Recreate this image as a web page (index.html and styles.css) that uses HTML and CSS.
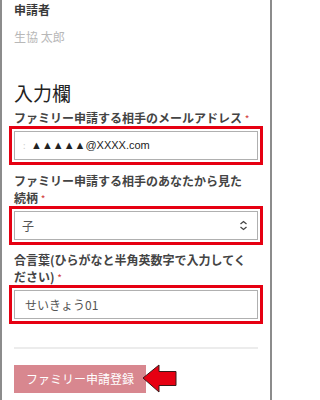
FILE: index.html
```html
<!DOCTYPE html>
<html lang="ja">
<head>
<meta charset="utf-8">
<link rel="stylesheet" href="styles.css">
</head>
<body>
<div class="page">
  <div class="applicant-label">申請者</div>
  <div class="applicant-name">生協 太郎</div>
  <h2 class="section-title">入力欄</h2>

  <div class="field field-first">
    <div class="label">ファミリー申請する相手のメールアドレス <span class="req">*</span></div>
    <div class="highlight">
      <div class="control control-email"><span class="ghost">:</span><span class="email">▲▲▲▲▲@XXXX.com</span></div>
    </div>
  </div>

  <div class="field field-second">
    <div class="label">ファミリー申請する相手のあなたから見た<br>続柄 <span class="req">*</span></div>
    <div class="highlight">
      <div class="control control-select">
        <span>子</span>
        <svg class="chevron" width="9" height="11" viewBox="0 0 9 11"><path d="M1.5 4 L4.5 1.5 L7.5 4 M1.5 7 L4.5 9.5 L7.5 7" fill="none" stroke="#444" stroke-width="1.3"/></svg>
      </div>
    </div>
  </div>

  <div class="field field-third">
    <div class="label">合言葉(ひらがなと半角英数字で入力してく<br>ださい) <span class="req">*</span></div>
    <div class="highlight">
      <div class="control control-text">せいきょう01</div>
    </div>
  </div>

  <hr class="divider">

  <div class="actions">
    <button class="submit">ファミリー申請登録</button>
    <svg class="arrow" width="36" height="30" viewBox="0 0 36 30"><path d="M1 14 L17 1 L17 7.5 L34 7.5 L34 21.5 L17 21.5 L17 28 Z" fill="#e60012" stroke="#3a1a1a" stroke-width="1"/></svg>
  </div>
</div>
</body>
</html>
```
FILE: styles.css
```css
html, body {
  margin: 0;
  padding: 0;
  background: #fff;
}
.page {
  box-sizing: border-box;
  width: 272px;
  height: 400px;
  border-left: 2px solid #8c8c8c;
  border-right: 2px solid #8c8c8c;
  padding: 0 12px;
  font-family: "Noto Sans CJK JP", "Noto Sans", sans-serif;
  color: #333;
  overflow: hidden;
}
.applicant-label {
  font-size: 12px;
  line-height: 20px;
  font-weight: bold;
  color: #3a3a3a;
}
.applicant-name {
  margin-top: 7px;
  font-size: 12px;
  line-height: 20px;
  color: #b8b8b8;
}
.section-title {
  margin: 32px 0 0;
  font-size: 19px;
  line-height: 28px;
  font-weight: normal;
  color: #222;
}
.field-first {
  margin-top: 2px;
}
.field-second {
  margin-top: 7px;
}
.field-third {
  margin-top: 6px;
}
.label {
  font-size: 12px;
  line-height: 17px;
  font-weight: bold;
  color: #444;
}
.req {
  color: #d23c3c;
  font-size: 10px;
  line-height: 0;
  font-weight: normal;
}
.highlight {
  margin: 0 -5px;
  border: 3px solid #e60012;
  padding: 2px;
}
.control {
  box-sizing: border-box;
  height: 29px;
  border: 1px solid #b0b0b0;
  display: flex;
  align-items: center;
  font-size: 12px;
  line-height: 1;
  color: #555;
  background: #fff;
}
.control-email {
  padding-left: 8px;
}
.ghost {
  color: #d0d0d0;
  font-size: 9px;
  width: 8px;
}
.email {
  font-family: "Liberation Sans", Arial, sans-serif;
  font-size: 11px;
  color: #222;
}
.control-select {
  justify-content: space-between;
  padding: 0 9px 0 7px;
}
.chevron {
  display: block;
}
.control-text {
  padding-left: 10px;
}
.divider {
  margin: 23px 0 0;
  border: 0;
  border-top: 2px solid #ececec;
  height: 0;
}
.actions {
  margin-top: 15px;
  display: flex;
  align-items: center;
}
.submit {
  height: 28px;
  padding: 0 12px;
  border: 0;
  background: #d8878f;
  color: #fff;
  font-family: "Noto Sans CJK JP", "Noto Sans", sans-serif;
  font-size: 12px;
  line-height: 28px;
  width: 132px;
  text-align: left;
}
.arrow {
  display: block;
  margin-left: -4px;
}
```
